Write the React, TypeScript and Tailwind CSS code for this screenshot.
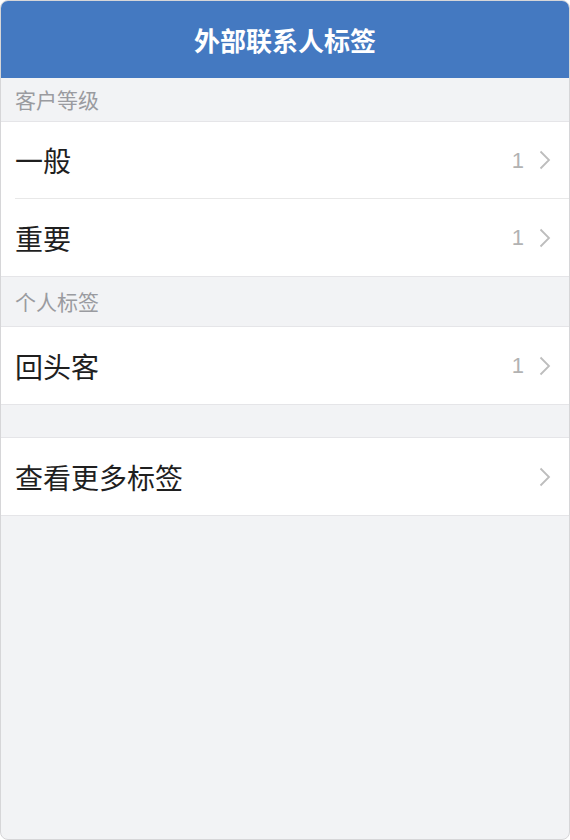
const font = { fontFamily: '"Noto Sans CJK SC", "Noto Sans", sans-serif' }

type Row = { label: string; count?: number }

function Chevron() {
  return (
    <svg width="12" height="20" viewBox="0 0 12 20" className="shrink-0">
      <polyline points="1.5,1.5 10,10 1.5,18.5" fill="none" stroke="#bdbdbd" strokeWidth="1.8" />
    </svg>
  )
}

function ListRow({ label, count, divider }: Row & { divider?: boolean }) {
  return (
    <div className="bg-white pl-[14px]">
      <div className={`flex items-center h-[77px] pr-[18px] ${divider ? 'border-b border-[#e8e8e8]' : ''}`}>
        <span className="flex-1 text-[28px] text-[#1f1f1f]">{label}</span>
        {count !== undefined && (
          <span className="text-[22px] text-[#b2b2b2] mr-[15px]" style={{ fontFamily: '"Liberation Sans", sans-serif' }}>
            {count}
          </span>
        )}
        <Chevron />
      </div>
    </div>
  )
}

function SectionTitle({ title, tall }: { title: string; tall?: boolean }) {
  return (
    <div className={`${tall ? 'h-[50px]' : 'h-11'} flex items-center px-[14px] text-[21px] text-[#9a9ba0] border-b border-[#e5e5e8]`}>
      {title}
    </div>
  )
}

export default function App() {
  return (
    <div className="w-[570px] h-[840px] bg-white" style={font}>
      <div className="h-full flex flex-col rounded-lg overflow-hidden border border-[#d6d6d8] bg-[#f2f3f5]">
        {/* Header */}
        <div className="h-[77px] shrink-0 bg-[#4479c1] flex items-center justify-center">
          <h1 className="text-white text-[26px] font-bold">外部联系人标签</h1>
        </div>

        <SectionTitle title="客户等级" />
        <ListRow label="一般" count={1} divider />
        <div className="border-b border-[#e5e5e8]">
          <ListRow label="重要" count={1} />
        </div>

        <SectionTitle title="个人标签" tall />
        <div className="border-b border-[#e5e5e8]">
          <ListRow label="回头客" count={1} />
        </div>

        <div className="h-[33px] border-b border-[#e5e5e8]" />
        <div className="border-b border-[#e5e5e8]">
          <ListRow label="查看更多标签" />
        </div>
      </div>
    </div>
  )
}
